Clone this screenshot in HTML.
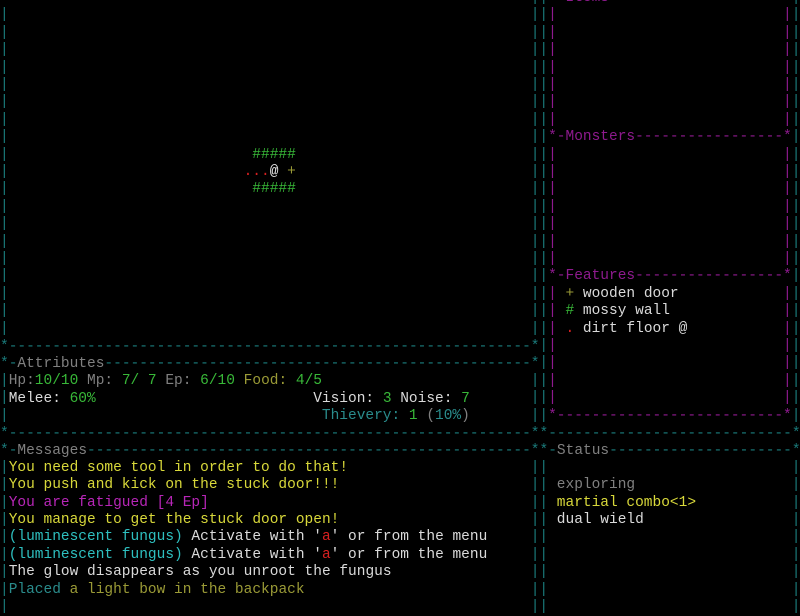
<!DOCTYPE html>
<html><head><meta charset="utf-8"><style>
html,body{margin:0;padding:0;background:#000;width:800px;height:600px;overflow:hidden}
body{font-family:"Liberation Mono","DejaVu Sans Mono",monospace;font-size:14.5px;line-height:17.4px;color:#ddd}
#w{position:absolute;left:0;top:2px;width:800px;height:600px}
.t{position:absolute;white-space:pre}
.b{color:#1a7a7a}
.m{color:#8e1a8e}
.g{color:#808080}
.w{color:#dadada}
.gr{color:#38b838}
.ol{color:#9a9a36}
.y{color:#d8d83a}
.mg{color:#b826b8}
.c{color:#2ec0c0}
.r{color:#d82020}
.tl{color:#2a8c8c}
</style></head><body><div id="w">
<div class="t b" style="left:0;top:5.3px">|<br>|<br>|<br>|<br>|<br>|<br>|<br>|<br>|<br>|<br>|<br>|<br>|<br>|<br>|<br>|<br>|<br>|<br>|</div>
<div class="t b" style="left:530.7px;top:-12.1px">|<br>|<br>|<br>|<br>|<br>|<br>|<br>|<br>|<br>|<br>|<br>|<br>|<br>|<br>|<br>|<br>|<br>|<br>|<br>|</div>
<div class="t b" style="left:539.4px;top:-12.1px">|<br>|<br>|<br>|<br>|<br>|<br>|<br>|<br>|<br>|<br>|<br>|<br>|<br>|<br>|<br>|<br>|<br>|<br>|<br>|<br>|<br>|<br>|<br>|<br>|</div>
<div class="t b" style="left:791.7px;top:-12.1px">|<br>|<br>|<br>|<br>|<br>|<br>|<br>|<br>|<br>|<br>|<br>|<br>|<br>|<br>|<br>|<br>|<br>|<br>|<br>|<br>|<br>|<br>|<br>|<br>|</div>
<div class="t b" style="left:0;top:370.7px">|<br>|<br>|</div>
<div class="t b" style="left:530.7px;top:370.7px">|<br>|<br>|</div>
<div class="t b" style="left:0;top:457.7px">|<br>|<br>|<br>|<br>|<br>|<br>|<br>|<br>|</div>
<div class="t b" style="left:530.7px;top:457.7px">|<br>|<br>|<br>|<br>|<br>|<br>|<br>|<br>|</div>
<div class="t b" style="left:539.4px;top:457.7px">|<br>|<br>|<br>|<br>|<br>|<br>|<br>|<br>|</div>
<div class="t b" style="left:791.7px;top:457.7px">|<br>|<br>|<br>|<br>|<br>|<br>|<br>|<br>|</div>
<div class="t m" style="left:548.1px;top:-12.1px">*-Items--------------------*</div>
<div class="t m" style="left:548.1px;top:5.3px">|<br>|<br>|<br>|<br>|<br>|<br>|</div>
<div class="t m" style="left:783px;top:5.3px">|<br>|<br>|<br>|<br>|<br>|<br>|</div>
<div class="t m" style="left:548.1px;top:127.1px">*-Monsters-----------------*</div>
<div class="t m" style="left:548.1px;top:144.5px">|<br>|<br>|<br>|<br>|<br>|<br>|</div>
<div class="t m" style="left:783px;top:144.5px">|<br>|<br>|<br>|<br>|<br>|<br>|</div>
<div class="t m" style="left:548.1px;top:266.3px">*-Features-----------------*</div>
<div class="t m" style="left:548.1px;top:283.7px">|<br>|<br>|<br>|<br>|<br>|<br>|</div>
<div class="t m" style="left:783px;top:283.7px">|<br>|<br>|<br>|<br>|<br>|<br>|</div>
<div class="t m" style="left:548.1px;top:405.5px">*--------------------------*</div>
<div class="t" style="left:565.5px;top:283.7px"><span class="ol">+</span> <span class="w">wooden door</span></div>
<div class="t" style="left:565.5px;top:301.1px"><span class="gr">#</span> <span class="w">mossy wall</span></div>
<div class="t" style="left:565.5px;top:318.5px"><span class="r">.</span> <span class="w">dirt floor @</span></div>
<div class="t gr" style="left:252.3px;top:144.5px">#####</div>
<div class="t" style="left:243.6px;top:161.9px"><span class="r">...</span><span class="w" style="font-weight:bold">@</span> <span class="ol">+</span></div>
<div class="t gr" style="left:252.3px;top:179.3px">#####</div>
<div class="t b" style="left:0;top:336.5px">*------------------------------------------------------------*</div>
<div class="t b" style="left:0;top:353.9px">*-<span class="g">Attributes</span>-------------------------------------------------*</div>
<div class="t b" style="left:0;top:423.5px">*------------------------------------------------------------**----------------------------*</div>
<div class="t b" style="left:0;top:440.9px">*-<span class="g">Messages</span>---------------------------------------------------**-<span class="g">Status</span>---------------------*</div>
<div class="t" style="left:8.7px;top:371.3px"><span class="g">Hp:</span><span class="gr">10/10</span> <span class="g">Mp:</span> <span class="gr">7/ 7</span> <span class="g">Ep:</span> <span class="gr">6/10</span> <span class="ol">Food:</span> <span class="gr">4/5</span></div>
<div class="t" style="left:8.7px;top:388.7px"><span class="w">Melee:</span> <span class="gr">60%</span></div>
<div class="t" style="left:313.2px;top:388.7px"><span class="w">Vision:</span> <span class="gr">3</span> <span class="w">Noise:</span> <span class="gr">7</span></div>
<div class="t" style="left:321.9px;top:406.1px"><span class="tl">Thievery:</span> <span class="gr">1</span> <span class="g">(</span><span class="tl">10%</span><span class="g">)</span></div>
<div class="t y" style="left:8.7px;top:457.7px">You need some tool in order to do that!</div>
<div class="t y" style="left:8.7px;top:475.1px">You push and kick on the stuck door!!!</div>
<div class="t mg" style="left:8.7px;top:492.5px">You are fatigued [4 Ep]</div>
<div class="t y" style="left:8.7px;top:509.9px">You manage to get the stuck door open!</div>
<div class="t" style="left:8.7px;top:527.3px"><span class="c">(luminescent fungus)</span> <span class="w">Activate with '</span><span class="r">a</span><span class="w">' or from the menu</span></div>
<div class="t" style="left:8.7px;top:544.7px"><span class="c">(luminescent fungus)</span> <span class="w">Activate with '</span><span class="r">a</span><span class="w">' or from the menu</span></div>
<div class="t w" style="left:8.7px;top:562.1px">The glow disappears as you unroot the fungus</div>
<div class="t" style="left:8.7px;top:579.5px"><span class="tl">Placed</span> <span class="ol">a light bow in the backpack</span></div>
<div class="t g" style="left:556.8px;top:475.1px">exploring</div>
<div class="t y" style="left:556.8px;top:492.5px">martial combo&lt;1&gt;</div>
<div class="t w" style="left:556.8px;top:509.9px">dual wield</div>
</div></body></html>
